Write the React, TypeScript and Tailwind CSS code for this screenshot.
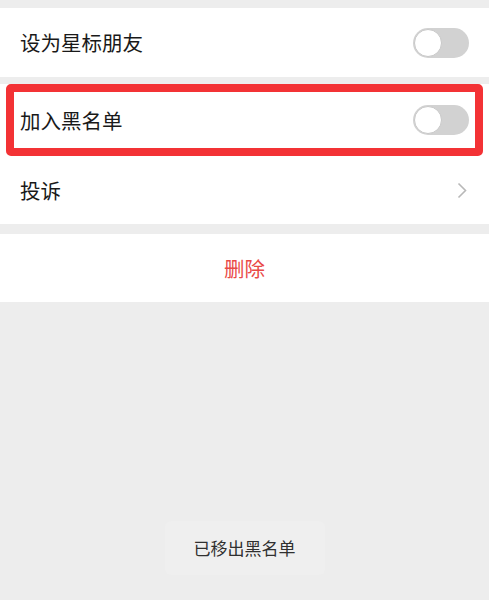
import React from 'react'

const Toggle = () => (
  <div className="w-[56px] h-[30px] rounded-full bg-[#d2d2d2] p-[1px]">
    <div className="w-[28px] h-[28px] rounded-full bg-white border border-[#c8c8c8]" />
  </div>
)

const App = () => {
  return (
    <div
      className="w-[489px] h-[600px] bg-[#ededed] flex flex-col text-[#191919]"
      style={{ fontFamily: '"Noto Sans CJK SC", "Noto Sans", sans-serif' }}
    >
      <div className="h-[8px]" />
      <div className="h-[69px] bg-white flex items-center justify-between pl-[20px] pr-[20px]">
        <span className="text-[20.5px]">设为星标朋友</span>
        <Toggle />
      </div>
      <div className="h-[7px]" />
      <div className="bg-white">
        <div className="h-[72px] mx-[6px] border-[8px] border-[#f33235] rounded-[5px] flex items-center justify-between pl-[6px] pr-[6px]">
          <span className="text-[20.5px]">加入黑名单</span>
          <Toggle />
        </div>
        <div className="h-[68px] flex items-center justify-between pl-[20px] pr-[22px]">
          <span className="text-[20.5px]">投诉</span>
          <svg width="10" height="17" viewBox="0 0 10 17" fill="none">
            <path d="M1.5 1.5L8.5 8.5L1.5 15.5" stroke="#b8b8b8" strokeWidth="1.6" />
          </svg>
        </div>
      </div>
      <div className="h-[10px]" />
      <div className="h-[68px] bg-white flex items-center justify-center">
        <span className="text-[20.5px] text-[#e94a47]">删除</span>
      </div>
      <div className="flex-1 flex flex-col items-center justify-end pb-[25px]">
        <div className="w-[160px] h-[54px] rounded-[6px] bg-[#efefef] flex items-center justify-center">
          <span className="text-[17px] text-[#303030]">已移出黑名单</span>
        </div>
      </div>
    </div>
  )
}

export default App
